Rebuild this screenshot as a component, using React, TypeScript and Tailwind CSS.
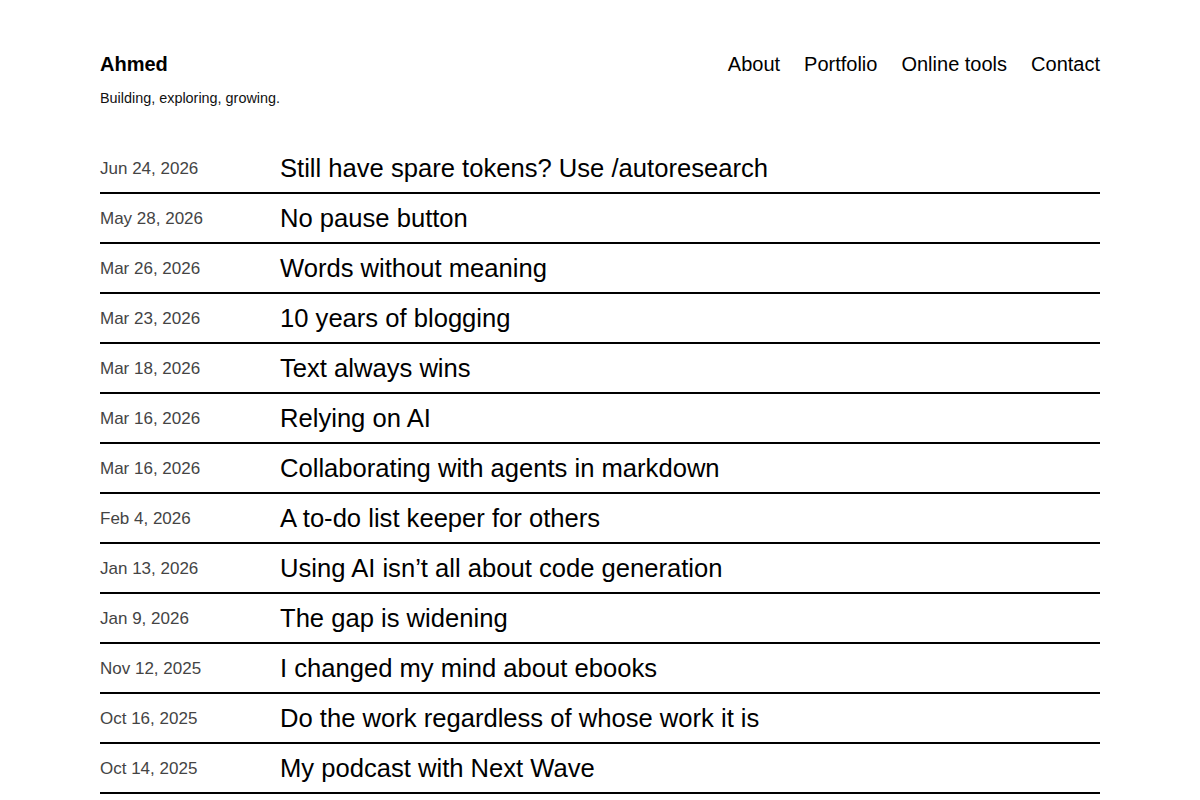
const posts = [
  { date: "Jun 24, 2026", title: "Still have spare tokens? Use /autoresearch" },
  { date: "May 28, 2026", title: "No pause button" },
  { date: "Mar 26, 2026", title: "Words without meaning" },
  { date: "Mar 23, 2026", title: "10 years of blogging" },
  { date: "Mar 18, 2026", title: "Text always wins" },
  { date: "Mar 16, 2026", title: "Relying on AI" },
  { date: "Mar 16, 2026", title: "Collaborating with agents in markdown" },
  { date: "Feb 4, 2026", title: "A to-do list keeper for others" },
  { date: "Jan 13, 2026", title: "Using AI isn\u2019t all about code generation" },
  { date: "Jan 9, 2026", title: "The gap is widening" },
  { date: "Nov 12, 2025", title: "I changed my mind about ebooks" },
  { date: "Oct 16, 2025", title: "Do the work regardless of whose work it is" },
  { date: "Oct 14, 2025", title: "My podcast with Next Wave" },
];

const nav = ["About", "Portfolio", "Online tools", "Contact"];

export default function App() {
  return (
    <div className="min-h-screen bg-white text-black font-['Liberation_Sans',Arial,sans-serif]">
      <div className="mx-auto w-[1000px] pt-[50px]">
        <header>
          <div className="flex items-center justify-between">
            <a href="#" className="text-[20px] leading-[28px] font-bold">
              Ahmed
            </a>
            <nav className="flex items-center gap-6">
              {nav.map((n) => (
                <a key={n} href="#" className="text-[20px] leading-[28px]">
                  {n}
                </a>
              ))}
            </nav>
          </div>
          <p className="mt-[10px] text-[14.4px] leading-[20px] text-[#111]">
            Building, exploring, growing.
          </p>
        </header>

        <ul className="mt-[36px]">
          {posts.map((p, i) => (
            <li
              key={i}
              className="flex items-center h-[50px] pt-[2px] border-b-2 border-black"
            >
              <span className="w-[180px] shrink-0 text-[17px] text-[#444]">
                {p.date}
              </span>
              <a href="#" className="text-[25.6px] leading-none">
                {p.title}
              </a>
            </li>
          ))}
        </ul>
      </div>
    </div>
  );
}
